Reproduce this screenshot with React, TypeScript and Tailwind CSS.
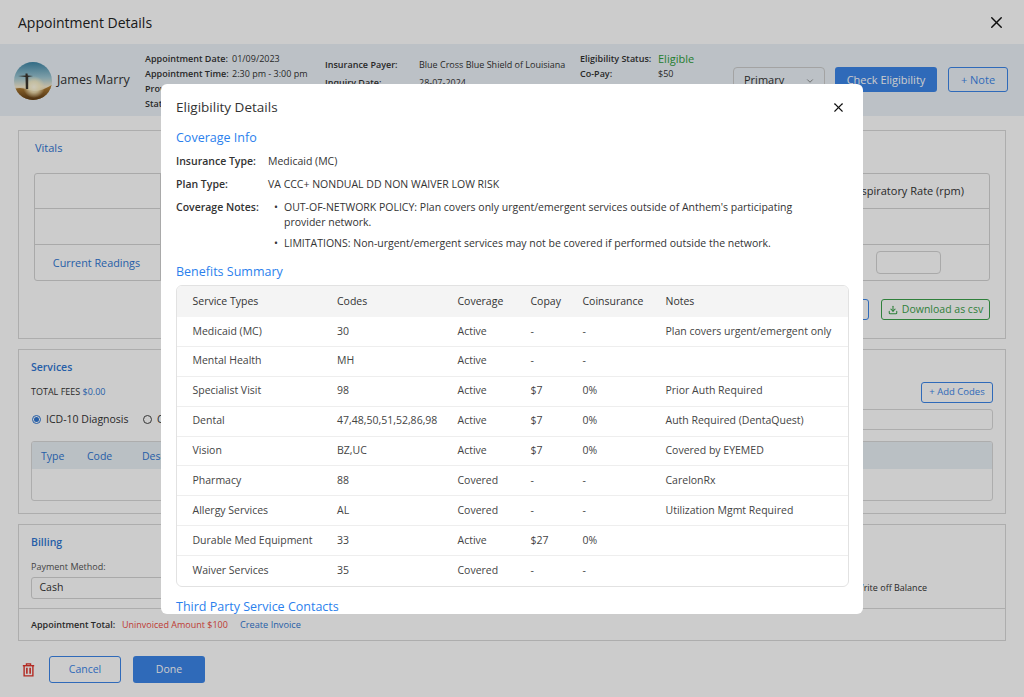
import { ChevronDown, Download, X } from "lucide-react";

const rows = [
  ["Medicaid (MC)", "30", "Active", "-", "-", "Plan covers urgent/emergent only"],
  ["Mental Health", "MH", "Active", "-", "-", ""],
  ["Specialist Visit", "98", "Active", "$7", "0%", "Prior Auth Required"],
  ["Dental", "47,48,50,51,52,86,98", "Active", "$7", "0%", "Auth Required (DentaQuest)"],
  ["Vision", "BZ,UC", "Active", "$7", "0%", "Covered by EYEMED"],
  ["Pharmacy", "88", "Covered", "-", "-", "CarelonRx"],
  ["Allergy Services", "AL", "Covered", "-", "-", "Utilization Mgmt Required"],
  ["Durable Med Equipment", "33", "Active", "$27", "0%", ""],
  ["Waiver Services", "35", "Covered", "-", "-", ""],
];

function Cols({ cells, cls }: { cells: string[]; cls: string }) {
  return (
    <div className={"grid grid-cols-[144.5px_120.5px_73px_52px_83px_1fr] pl-[15.5px] items-center " + cls}>
      {cells.map((c, i) => (
        <div key={i} className="whitespace-nowrap">{c}</div>
      ))}
    </div>
  );
}

function Avatar() {
  return (
    <svg width="38" height="38" viewBox="0 0 38 38" className="shrink-0">
      <defs>
        <linearGradient id="sky" x1="0" y1="0" x2="0" y2="1">
          <stop offset="0" stopColor="#3f86a6" />
          <stop offset="0.4" stopColor="#9cc6d2" />
          <stop offset="0.65" stopColor="#f4ead0" />
          <stop offset="1" stopColor="#a87a30" />
        </linearGradient>
        <radialGradient id="sun" cx="0.5" cy="0.5" r="0.5">
          <stop offset="0" stopColor="#fffbe8" />
          <stop offset="0.5" stopColor="#fff3c8" stopOpacity="0.8" />
          <stop offset="1" stopColor="#fff3c8" stopOpacity="0" />
        </radialGradient>
        <linearGradient id="ground" x1="0" y1="0" x2="0" y2="1">
          <stop offset="0" stopColor="#c08a3a" />
          <stop offset="1" stopColor="#5e3c16" />
        </linearGradient>
        <clipPath id="c"><circle cx="19" cy="19" r="19" /></clipPath>
      </defs>
      <g clipPath="url(#c)">
        <rect width="38" height="38" fill="url(#sky)" />
        <path d="M0 27 C8 24 14 28 20 29 C28 29 34 25 38 23 V38 H0Z" fill="url(#ground)" />
        <circle cx="20" cy="25" r="11" fill="url(#sun)" />
        <path d="M4 14 L11.5 13.4 L11.5 11.5 L13.5 11.5 L13.8 13.4 L19 14 L14.2 15 L14.2 27 L11.8 27 L11.5 15 Z" fill="#3a342c" />
      </g>
    </svg>
  );
}

function TrashIcon() {
  return (
    <svg width="13" height="14" viewBox="0 0 16 17" fill="none" stroke="#e0342b" strokeWidth="1.7" className="shrink-0">
      <path d="M1 3.2 H15" />
      <path d="M5.5 3 V1 H10.5 V3" />
      <path d="M2.6 3.2 V15.8 H13.4 V3.2" />
      <path d="M6 5.8 V13" strokeWidth="2" />
      <path d="M10 5.8 V13" strokeWidth="2" />
    </svg>
  );
}

export default function App() {
  return (
    <div className="relative w-[1024px] h-[697px] overflow-hidden bg-white font-['Open_Sans',sans-serif] text-[#333]">
      {/* Page behind the dialog */}
      <div className="flex flex-col h-full">
        <div className="h-[44px] flex items-center justify-between pl-[18px] pr-[18px]">
          <div className="text-[14px] font-medium text-[#222]">Appointment Details</div>
          <X size={19} strokeWidth={1.8} className="text-[#111]" />
        </div>

        <div className="h-[72px] bg-[#ebf2f8] flex pl-[14px] pr-[16px]">
          <div className="w-[131px] flex items-center gap-[5px] shrink-0 pt-[1px]">
            <Avatar />
            <span className="text-[12.5px] font-medium whitespace-nowrap">James Marry</span>
          </div>
          <div className="w-[180px] pt-[7px] text-[9px] leading-[15px] shrink-0 whitespace-nowrap">
            <div className="flex"><span className="w-[87px] font-semibold">Appointment Date:</span><span>01/09/2023</span></div>
            <div className="flex"><span className="w-[87px] font-semibold">Appointment Time:</span><span>2:30 pm - 3:00 pm</span></div>
            <div className="flex"><span className="w-[87px] font-semibold">Provider:</span></div>
            <div className="flex"><span className="w-[87px] font-semibold">Status:</span></div>
          </div>
          <div className="w-[255px] pt-[12px] text-[9px] leading-[18px] shrink-0">
            <div className="flex"><span className="w-[94px] font-semibold">Insurance Payer:</span><span className="whitespace-nowrap">Blue Cross Blue Shield of Louisiana</span></div>
            <div className="flex"><span className="w-[94px] font-semibold">Inquiry Date:</span><span>28-07-2024</span></div>
          </div>
          <div className="w-[153px] pt-[7px] text-[9px] leading-[15px] shrink-0">
            <div className="flex items-center"><span className="w-[78px] font-semibold">Eligibility Status:</span><span className="text-[11px] text-[#2e9e3a]">Eligible</span></div>
            <div className="flex"><span className="w-[78px] font-semibold">Co-Pay:</span><span>$50</span></div>
          </div>
          <div className="flex gap-[10px] pt-[23px] items-start">
            <div className="w-[92px] h-[26px] rounded-[4px] border border-[#ccc] bg-[#ebf2f8] flex items-center justify-between pl-[10px] pr-[9px] text-[11px] pt-[1px]">
              Primary <ChevronDown size={10} className="text-[#777]" />
            </div>
            <div className="w-[102px] h-[25px] rounded-[3px] bg-[#3b85e8] text-white text-[11px] flex items-center justify-center whitespace-nowrap pt-[1px]">Check Eligibility</div>
            <div className="ml-[1px] w-[60px] h-[25px] rounded-[3px] border border-[#3b85e8] text-[#3b85e8] text-[11px] flex items-center justify-center whitespace-nowrap pt-[1px]">+ Note</div>
          </div>
        </div>

        <div className="flex flex-col px-[18px] pt-[14px]">
          {/* Vitals */}
          <div className="h-[209px] border border-[#d9d9d9] pt-[9px] px-[15px]">
            <div className="text-[11px] font-medium text-[#2f76d2] leading-[16px] ml-[1px]">Vitals</div>
            <div className="mt-[17px] h-[108px] border border-[#d4d4d4] rounded-[3px] flex flex-col text-[11px]">
              <div className="h-[35px] flex border-b border-[#d4d4d4]">
                <div className="w-[126px] border-r border-[#d4d4d4]"></div>
                <div className="flex-1 flex items-center justify-end pr-[25px] whitespace-nowrap">Respiratory Rate (rpm)</div>
              </div>
              <div className="h-[36px] flex border-b border-[#d4d4d4]">
                <div className="w-[126px] border-r border-[#d4d4d4]"></div>
              </div>
              <div className="flex-1 flex">
                <div className="w-[126px] border-r border-[#d4d4d4] flex items-center justify-center pt-[2px] pr-[2px]">
                  <span className="font-medium text-[#2f76d2] text-[10.8px]">Current Readings</span>
                </div>
                <div className="flex-1 flex items-center justify-end pr-[48px]">
                  <div className="w-[65px] h-[23px] rounded-[4px] border border-[#d4d4d4]"></div>
                </div>
              </div>
            </div>
            <div className="mt-[18px] flex justify-end gap-[12px]">
              <div className="w-[120px] h-[21px] rounded-[3px] border border-[#3b85e8]"></div>
              <div className="w-[109px] h-[21px] rounded-[3px] border border-[#3ba14a] text-[#3ba14a] text-[10.5px] flex items-center justify-center gap-[4px] whitespace-nowrap pt-[1px]">
                <Download size={10} strokeWidth={2.5} /> Download as csv
              </div>
            </div>
          </div>

          {/* Services */}
          <div className="mt-[10px] h-[165px] border border-[#d9d9d9] pt-[9px] pl-[12px] pr-[12px]">
            <div className="text-[10.5px] font-semibold text-[#2f76d2] leading-[16px]">Services</div>
            <div className="mt-[9px] flex justify-between items-start">
              <div className="text-[9px] leading-[12px] mt-[2px]">TOTAL FEES <span className="text-[#2f76d2]">$0.00</span></div>
              <div className="w-[72px] h-[21px] -mt-[2px] rounded-[3px] border border-[#3b85e8] text-[#3b85e8] text-[9.5px] flex items-center justify-center whitespace-nowrap">+ Add Codes</div>
            </div>
            <div className="mt-[6px] flex items-center">
              <div className="flex items-center gap-[5px] text-[10.5px] w-[111px] ml-[1px]">
                <span className="w-[9px] h-[9px] rounded-full border border-[#2f76d2] flex items-center justify-center">
                  <span className="w-[5px] h-[5px] rounded-full bg-[#2f76d2]"></span>
                </span>
                ICD-10 Diagnosis
              </div>
              <span className="w-[9px] h-[9px] rounded-full border border-[#444] mr-[5px]"></span>
              <span className="text-[10.5px]">CPT</span>
              <div className="ml-auto w-[441px] h-[21px] rounded-[3px] border border-[#d9d9d9]"></div>
            </div>
            <div className="mt-[11px] h-[60px] rounded-[3px] border border-[#d9d9d9] overflow-hidden">
              <div className="h-[27px] bg-[#e9f0f5] flex items-center pl-[9px] pt-[2px] text-[10.5px] text-[#2f76d2]">
                <span className="w-[46px]">Type</span><span className="w-[55px]">Code</span><span>Description</span>
              </div>
            </div>
          </div>

          {/* Billing */}
          <div className="mt-[10px] h-[117px] border border-[#d9d9d9] flex flex-col">
            <div className="h-[84px] border-b border-[#d9d9d9] pt-[9px] pl-[12px]">
              <div className="text-[10.5px] font-semibold text-[#2f76d2] leading-[16px]">Billing</div>
              <div className="mt-[11px] text-[9px] leading-[12px] text-[#555]">Payment Method:</div>
              <div className="flex items-center justify-between pr-[78px]">
                <div className="mt-[4px] w-[150px] h-[22px] rounded-[3px] border border-[#d4d4d4] flex items-center pl-[7.5px] text-[10.5px]">Cash</div>
                <span className="text-[9px] whitespace-nowrap mt-[4px]">Write off Balance</span>
              </div>
            </div>
            <div className="flex-1 flex items-center pl-[12px] text-[9px]">
              <span className="font-semibold w-[91px] whitespace-nowrap">Appointment Total:</span>
              <span className="text-[#ee4b43] w-[118px] whitespace-nowrap">Uninvoiced Amount $100</span>
              <span className="text-[#2f76d2] font-medium whitespace-nowrap text-[9.2px]">Create Invoice</span>
            </div>
          </div>

          {/* Footer */}
          <div className="mt-[15px] flex items-center pl-[4px]">
            <TrashIcon />
            <div className="ml-[14px] w-[72px] h-[27px] rounded-[3px] border border-[#3b85e8] text-[#3b85e8] text-[10.5px] font-medium flex items-center justify-center pt-[1px]">Cancel</div>
            <div className="ml-[12px] w-[72px] h-[27px] rounded-[3px] bg-[#3b85e8] text-white text-[10.5px] font-medium flex items-center justify-center pt-[1px]">Done</div>
          </div>
        </div>
      </div>

      {/* Backdrop */}
      <div className="absolute inset-0 bg-black/20"></div>

      {/* Dialog */}
      <div className="absolute left-[161px] top-[84px] w-[702px] h-[530px] bg-white rounded-[6px] overflow-hidden px-[15px] text-[#333]">
        <div className="h-[46px] flex items-center justify-between pr-[2px]">
          <span className="text-[13.5px] text-[#333]">Eligibility Details</span>
          <X size={15} strokeWidth={1.8} className="text-[#111]" />
        </div>
        <div className="text-[12.5px] font-medium text-[#2b7fed] leading-[16px]">Coverage Info</div>
        <div className="mt-[8px] text-[10.5px] leading-[15px] flex">
          <span className="w-[92px] font-semibold whitespace-nowrap">Insurance Type:</span><span>Medicaid (MC)</span>
        </div>
        <div className="mt-[8px] text-[10.5px] leading-[15px] flex">
          <span className="w-[92px] font-semibold">Plan Type:</span><span>VA CCC+ NONDUAL DD NON WAIVER LOW RISK</span>
        </div>
        <div className="mt-[8px] text-[10.5px] leading-[15px] flex">
          <span className="w-[92px] font-semibold shrink-0">Coverage Notes:</span>
          <ul className="w-[540px] flex flex-col gap-[6px]">
            <li className="flex"><span className="w-[16px] shrink-0 pl-[6px]">•</span><span>OUT-OF-NETWORK POLICY: Plan covers only urgent/emergent services outside of Anthem's participating provider network.</span></li>
            <li className="flex"><span className="w-[16px] shrink-0 pl-[6px]">•</span><span>LIMITATIONS: Non-urgent/emergent services may not be covered if performed outside the network.</span></li>
          </ul>
        </div>
        <div className="mt-[13px] text-[12.5px] font-medium text-[#2b7fed] leading-[16px]">Benefits Summary</div>
        <div className="mt-[5px] w-[673px] border border-[#e2e2e2] rounded-[6px] overflow-hidden text-[10.5px]">
          <Cols cells={["Service Types", "Codes", "Coverage", "Copay", "Coinsurance", "Notes"]} cls="h-[31px] bg-[#f4f4f4] font-medium" />
          {rows.map((r, i) => (
            <Cols key={i} cells={r} cls={"h-[29.9px] text-[#444] " + (i < rows.length - 1 ? "border-b border-[#eeeeee]" : "")} />
          ))}
        </div>
        <div className="mt-[12px] text-[12.5px] font-medium text-[#2b7fed] leading-[16px] whitespace-nowrap">Third Party Service Contacts</div>
      </div>
    </div>
  );
}
